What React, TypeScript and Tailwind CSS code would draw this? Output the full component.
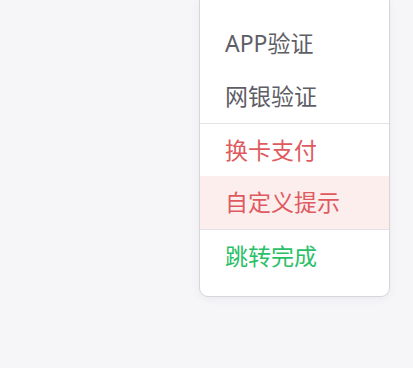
const items = [
  { label: "APP验证", tone: "text-[#5e5e66]", divider: false, active: false },
  { label: "网银验证", tone: "text-[#5e5e66]", divider: false, active: false },
  { label: "换卡支付", tone: "text-[#df5a60]", divider: true, active: false },
  { label: "自定义提示", tone: "text-[#df5a60]", divider: false, active: true },
  { label: "跳转完成", tone: "text-[#2bbf68]", divider: true, active: false },
];

export default function App() {
  return (
    <div
      className="w-[413px] h-[368px] bg-[#f6f6f9] pl-[199px]"
      style={{ fontFamily: '"Noto Sans", "Noto Sans CJK SC", sans-serif' }}
    >
      <div className="w-[191px] bg-white border border-t-0 border-[#d6d6da] rounded-b-[9px] pt-[17px] pb-[14px] shadow-[0_2px_10px_rgba(0,0,0,0.05)]">
        {items.map((it) => (
          <div
            key={it.label}
            className={`h-[53px] flex items-center pl-[25px] text-[23px] ${it.tone} ${
              it.divider ? "border-t border-[#e3e3e6]" : ""
            } ${it.active ? "bg-[#fdeeee]" : ""}`}
          >
            {it.label}
          </div>
        ))}
      </div>
    </div>
  );
}
